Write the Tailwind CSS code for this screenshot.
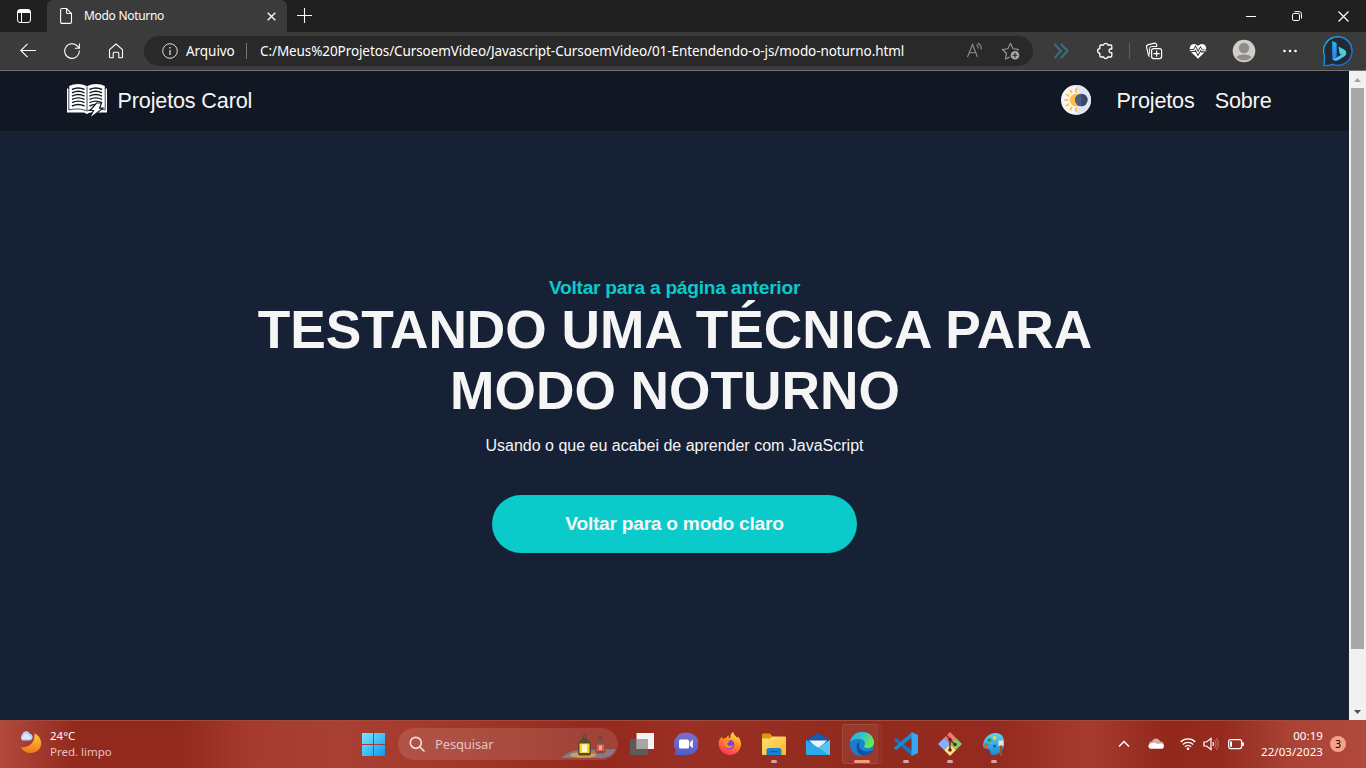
<!DOCTYPE html>
<html lang="pt-BR">
<head>
<meta charset="utf-8">
<title>Modo Noturno</title>
<script src="https://cdn.jsdelivr.net/npm/@tailwindcss/browser@4"></script>
</head>
<body class="w-[1366px] h-[768px] overflow-hidden flex flex-col bg-[#162136] font-['Noto_Sans','Open_Sans',sans-serif] text-white">

<!-- Title bar -->
<header class="flex h-8 bg-[#202020] shrink-0">
  <div class="w-[47px] flex items-center pl-[16px]">
    <svg class="size-4" viewBox="0 0 16 16" fill="none" stroke="#fff"><rect x="1.5" y="1.5" width="13" height="13" rx="2.5"/><path d="M2 3.5h12M2 2.5h12M2 4.500h12M5.500 5v9"/></svg>
  </div>
  <div class="w-[240px] bg-[#3b3b3b] rounded-t-[6px] flex items-center">
    <svg class="ml-[12px] w-[14px] h-[18px]" viewBox="0 0 14 18" fill="none" stroke="#fff" stroke-width="1.1"><path d="M3 1.5h4.5l5 5v8.5a1.4 1.4 0 0 1-1.4 1.4H3A1.4 1.4 0 0 1 1.600 15V2.900A1.400 1.400 0 0 1 3 1.500zM7.500 1.500v3.700a1.300 1.300 0 0 0 1.300 1.300h3.700"/></svg>
    <span class="ml-[11px] w-[183px] text-[12px] leading-4 tracking-[-0.3px] whitespace-nowrap">Modo Noturno</span>
    <svg class="size-[9px] shrink-0" viewBox="0 0 9 9" stroke="#fff" stroke-width="1.3"><path d="M.7.7l7.600 7.600M8.300.700L.700 8.300"/></svg>
  </div>
  <div class="ml-[10px] flex items-center pb-px"><svg class="size-[15px]" viewBox="0 0 15 15" stroke="#fff" stroke-width="1.1"><path d="M7.500 0v15M0 7.500h15"/></svg></div>
  <div class="ml-auto flex items-center">
    <div class="w-[46px] flex justify-center"><svg class="size-[10px]" viewBox="0 0 10 10" stroke="#fff"><path d="M0 5.500h10"/></svg></div>
    <div class="w-[46px] flex justify-center"><svg class="size-[10px]" viewBox="0 0 10 10" stroke="#fff" fill="none"><rect x=".5" y="2.500" width="7" height="7" rx="1.300"/><path d="M2.500.600h4.500a2.500 2.500 0 0 1 2.500 2.500v4.400"/></svg></div>
    <div class="w-[46px] flex justify-center"><svg class="size-[11px]" viewBox="0 0 11 11" stroke="#fff" stroke-width="1.200"><path d="M.500.500l10 10M10.500.500l-10 10"/></svg></div>
  </div>
</header>

<!-- Toolbar -->
<div class="flex items-center h-[39px] pb-px bg-[#3b3b3b] border-b border-[#727272] shrink-0">
  <svg class="ml-[20px] size-4" viewBox="0 0 16 16" fill="none" stroke="#fff" stroke-width="1.100"><path d="M16 7.500H.800M7.500.800L.800 7.500l6.700 6.700"/></svg>
  <svg class="ml-[28px] size-4" viewBox="0 0 16 16" fill="none" stroke="#fff" stroke-width="1.100"><path d="M15.300 7.500A7.300 7.300 0 1 1 13.800 3.600L15.300 5M15.400.500V5.300H10.800"/></svg>
  <svg class="ml-[28px] size-4" viewBox="0 0 16 16" fill="none" stroke="#fff" stroke-width="1.100" stroke-linejoin="round"><path d="M1.500 6.600L8 1l6.500 5.600v7.100a1 1 0 0 1-1 1h-2.700V10.200a1 1 0 0 0-1-1H6.200a1 1 0 0 0-1 1v4.500H2.500a1 1 0 0 1-1-1z"/></svg>
  <div class="ml-[20px] w-[889px] h-[30px] rounded-full bg-[#292929] flex items-center text-[13.5px]">
    <svg class="ml-[18px] size-4" viewBox="0 0 16 16" fill="none" stroke="#ddd"><circle cx="8" cy="8" r="7.300"/><path stroke-width="1.300" d="M8 7v5M8 4v1.500"/></svg>
    <span class="ml-[8px] mt-px w-[60px] tracking-[-0.05px] whitespace-nowrap">Arquivo</span>
    <span class="w-px h-4 bg-[#777]"></span>
    <span class="ml-[13px] mt-px w-[702px] whitespace-nowrap tracking-[-0.09px]">C:/Meus%20Projetos/CursoemVideo/Javascript-CursoemVideo/01-Entendendo-o-js/modo-noturno.html</span>
    <svg class="size-6 shrink-0" viewBox="0 0 24 24" fill="none" stroke="#8e8e8e" stroke-width="1.100"><path d="M5.500 18L10.500 5.500l5 12.500M7.300 13.800h6.400M14.500 5.500a5 5 0 0 1 1.800 4M16 4a7.300 7.300 0 0 1 3.300 6.500"/></svg>
    <svg class="ml-[13px] size-6 shrink-0" viewBox="0 0 24 24" fill="none" stroke="#9a9a9a" stroke-width="1.100" stroke-linejoin="round"><path d="M11 18l-4.500 2 1-5.500-4-4 5.400-.800L11.500 4.300 14.100 9.700l5.400.800-1 1"/><circle cx="16" cy="16.200" r="4.300" fill="#aaa" stroke="none"/><path stroke="#292929" d="M13.500 16.200h5M16 13.700v5"/></svg>
  </div>
  <svg class="ml-[16px] size-6" viewBox="0 0 24 24" fill="none" stroke="#386e81" stroke-width="2.200"><path d="M5.500 5l6.500 7-6.500 7M12 5l6.500 7-6.500 7"/></svg>
  <svg class="ml-[20px] size-6" viewBox="0 0 24 24" fill="none" stroke="#fff" stroke-width="1.300" stroke-linejoin="round"><path d="M8 6h2.600a2.200 2.200 0 0 1 4.200 0h2.800a1.200 1.200 0 0 1 1.200 1.200v2.800h-1a1.800 1.800 0 0 0 0 3.600h1v3.200a1.200 1.200 0 0 1-1.200 1.200h-2.800a2.200 2.200 0 0 1-4.200 0H8a1.200 1.200 0 0 1-1.200-1.200v-2.700a2.200 2.200 0 0 1 0-4.400V7.200A1.200 1.200 0 0 1 8 6z"/></svg>
  <span class="ml-[12px] w-px h-4 bg-[#5e5e5e]"></span>
  <svg class="ml-[12px] size-6" viewBox="0 0 24 24" fill="none" stroke="#fff" stroke-width="1.200"><rect x="9.600" y="9.600" width="10" height="10" rx="2"/><path d="M14.600 11.500v6.200M11.500 14.600h6.200M7.600 17.500c-.700-.400-1-.900-1.200-1.700L4.600 8.100a1.800 1.800 0 0 1 1.200-2.200l6.700-1.700a1.800 1.800 0 0 1 2 1.200l.500 1.800"/><path d="M7.600 15.500V9.700a2.200 2.200 0 0 1 2.200-2.200H15" stroke-width="1"/></svg>
  <svg class="ml-[20px] size-6" viewBox="0 0 24 24" fill="none"><path fill="#fff" d="M12 19.800L5.300 13.200C2 9.500 4.500 5 8 5c2 0 3 1 4 2 1-1 2-2 4-2 3.500 0 6 4.500 2.700 8.200z"/><path stroke="#3b3b3b" stroke-width="3" d="M4 11.500h4.200l1.300-2.300 2.500 5 2.500-4.400 1.500 2.200H20"/><path stroke="#fff" stroke-width="1.100" d="M3.800 11.500h4.400l1.300-2.300 2.500 5 2.500-4.400 1.500 2h4.200"/></svg>
  <svg class="ml-[22px] size-6" viewBox="0 0 24 24"><circle cx="12" cy="12" r="11.300" fill="#d2cfcb"/><circle cx="12" cy="9" r="5.200" fill="#918d88"/><path fill="#918d88" d="M4.500 18.500c1.500-4 13.500-4 15 0a11 11 0 0 1-15 0z"/></svg>
  <svg class="ml-[22px] size-6" viewBox="0 0 24 24" fill="#fff"><circle cx="6.500" cy="12" r="1.300"/><circle cx="12" cy="12" r="1.300"/><circle cx="17.500" cy="12" r="1.300"/></svg>
  <svg class="ml-[20px] size-8" viewBox="0 0 32 32">
    <defs><linearGradient id="br" x1="0" y1="0" x2="1" y2="1"><stop stop-color="#18b5ee"/><stop offset="1" stop-color="#2459e0"/></linearGradient><linearGradient id="bb" x1="0" y1="0" x2="0" y2="1"><stop stop-color="#28b5f7"/><stop offset="1" stop-color="#2874ef"/></linearGradient><linearGradient id="bc" x1="1" y1="0" x2="0" y2="1"><stop stop-color="#37e0cd"/><stop offset="1" stop-color="#54b4ff"/></linearGradient></defs>
    <path d="M16 1.700a14.300 14.300 0 1 1-5.500 27.600c-2.500 1.200-5 1.300-8.300 1.300C1.700 28 2.700 26 2.500 21A14.300 14.300 0 0 1 16 1.700z" fill="#222a33" stroke="url(#br)" stroke-width="1.400"/>
    <path fill="url(#bb)" d="M10.200 6l3.500 1.500c.800.400 1 .800 1 1.500V21l-1.500 4.500c-2 .300-3-1.500-3-3z"/>
    <path fill="url(#bc)" d="M16.500 11.500l6 3.200c2.500 1.800 2 5 .300 6.300l-6.300 4c-2.700 1.600-5 .500-6-1.500 2 .500 3-.200 4.500-1.200l4.500-2.700-2-1z"/>
  </svg>
</div>

<!-- Page viewport -->
<div class="flex h-[649px] shrink-0 font-['Liberation_Sans',Arial,sans-serif]">
  <main class="w-[1349px] flex flex-col">
    <nav class="flex items-center h-[60px] bg-[#111823] text-[21.6px] tracking-[-0.15px] leading-6 text-[#f5f5f5] shrink-0">
      <svg class="ml-[66px] -mt-px w-[42px] h-9" viewBox="0 0 42 36" fill="none">
        <path fill="#fff" d="M1 5.500h2.200V3C8 .500 15 0 21 3.200 27 0 34 .500 38.800 3v2.500H41V29.500H25c-2.500.200-3 1.500-4 1.500s-1.500-1.300-4-1.500H1z"/>
        <path stroke="#111823" stroke-width=".8" d="M2.800 5v22c6-1.500 13-1.500 18.200 1 5-2.500 12-2.500 18.200-1V5M21 3.500V27"/>
        <path stroke="#111823" stroke-width="1.400" d="M6 6.500c4-2 8.500-2 12.500 0M6 9.800c4-2 8.500-2 12.500 0M6 13.100c4-2 8.500-2 12.500 0M6 16.400c4-2 8.500-2 12.500 0M6 19.700c4-2 8.500-2 12.500 0M6 23c4-2 8.500-2 12.500 0M23.500 6.500c4-2 8.500-2 12.500 0M23.500 9.800c4-2 8.500-2 12.500 0M23.500 13.100c4-2 8.500-2 12.500 0M23.500 16.400c4-2 8.500-2 12.500 0M23.500 19.700c4-2 8.500-2 12.500 0M23.500 23c2-1 4-1.500 6-1.500"/>
        <path fill="#fff" stroke="#111823" stroke-width="1.200" d="M30.500 20h5l-2 5.200h3.500L23 36l4.500-8.500h-3.500z"/>
      </svg>
      <span class="ml-[9.5px]">Projetos Carol</span>
      <svg class="ml-auto -mt-[2px] size-[30px]" viewBox="0 0 30 30">
        <circle cx="15" cy="15" r="15" fill="#f5f5f7"/><path fill="#dfe3f2" d="M15 0a15 15 0 0 1 0 30z"/>
        <path stroke="#ffc34d" stroke-width="2" stroke-linecap="round" d="M15 4v2.500M15 23.500v2.500M9.500 5.500l1 2M9.500 24.500l1-2M5.500 9.500l2 1.200M5.500 20.500l2-1.200M4 15h2.500"/>
        <circle cx="15" cy="15" r="6.300" fill="#ffc043"/><circle cx="20.200" cy="15" r="6.300" fill="#4c5b81"/><path fill="#3d4667" d="M20.200 8.700a6.300 6.300 0 0 1 0 12.600z"/>
      </svg>
      <span class="ml-[26px]">Projetos</span>
      <span class="ml-[20px] mr-[77.5px]">Sobre</span>
    </nav>
    <section class="flex flex-col items-center pt-[146px] text-center">
      <a class="font-bold text-[19.2px] tracking-[-0.26px] leading-[22px] text-[#0acaca]">Voltar para a página anterior</a>
      <h1 class="w-[900px] pl-px font-bold text-[53.28px] leading-[61px] text-[#f5f5f5]">TESTANDO UMA TÉCNICA PARA<br>MODO NOTURNO</h1>
      <p class="mt-[16px] text-base leading-[18px] text-[#f5f5f5]">Usando o que eu acabei de aprender com JavaScript</p>
      <button class="mt-[40px] w-[365px] h-[58px] rounded-full bg-[#0acaca] font-bold text-[19.2px] tracking-[-0.26px] text-[#f5f5f5]">Voltar para o modo claro</button>
    </section>
  </main>
  <div class="w-[17px] bg-[#f1f1f1] flex flex-col items-center">
    <div class="h-[17px] flex items-center pt-px"><svg class="w-[7px] h-1" viewBox="0 0 7 4" fill="#a3a3a3"><path d="M0 4L3.500 0 7 4z"/></svg></div>
    <div class="w-[13px] h-[561px] bg-[#a8a8a8]"></div>
    <div class="mt-auto h-[17px] flex items-center"><svg class="w-[7px] h-1" viewBox="0 0 7 4" fill="#505050"><path d="M0 0h7L3.500 4z"/></svg></div>
  </div>
</div>

<!-- Taskbar -->
<footer class="h-12 shrink-0 flex items-center pb-px border-t border-[#a5493b] bg-[linear-gradient(90deg,#b2493c_0px,#a13a2d_38px,#92291d_75px,#92291d_180px,#a43b2e_250px,#a94034_340px,#a23628_470px,#94281c_600px,#9a3025_690px,#922a1e_850px,#952b20_1000px,#a63c31_1090px,#92281b_1165px,#942a1e_1220px,#aa4236_1290px,#b1493d_1366px)]">
  <svg class="ml-[18px] -mt-[5px] size-6" viewBox="0 0 24 24"><defs><linearGradient id="mo" x1="0" y1="0" x2="0" y2="1"><stop stop-color="#ffc93a"/><stop offset="1" stop-color="#f0791b"/></linearGradient></defs><path fill="url(#mo)" d="M16.500 3.500c10 4 9 19.500-4 19.500-4.500 0-7.500-2-9.500-5.500C12.500 17.500 17 12 16.500 3.500z"/><path fill="#b9d3fa" d="M4.500 10.500a4 4 0 0 1-.300-6c1-4 6-4.500 7.300-1 4 .500 4.500 7-.500 7z"/><path fill="#dbe9ff" d="M5 7c1-4 5-4 6-1 2 0 2 2 1 3H3z"/></svg>
  <div class="ml-[8px] w-[100px] text-[11.500px] leading-4 whitespace-nowrap"><div>24°C</div><div class="text-[#e6c2bd]">Pred. limpo</div></div>
  <svg class="ml-[212px] size-[23px] shrink-0" viewBox="0 0 23 23"><defs><linearGradient id="wi" x1="0" y1="0" x2="1" y2="1"><stop stop-color="#78e9ff"/><stop offset="1" stop-color="#0c97f2"/></linearGradient></defs><path fill="url(#wi)" d="M0 0h11v11H0zM12 0h11v11H12zM0 12h11v11H0zM12 12h11v11H12z"/></svg>
  <div class="ml-[13px] w-[220px] h-8 rounded-full bg-white/12 flex items-center overflow-hidden shrink-0">
    <svg class="ml-[11px] size-4" viewBox="0 0 16 16" fill="none" stroke="#f0dedb" stroke-width="1.700"><circle cx="6.800" cy="6.800" r="5.500"/><path stroke-linecap="round" d="M11 11l4 4"/></svg>
    <span class="ml-[10px] mt-px text-[13px] tracking-[-0.150px] text-[#e3c4c0]">Pesquisar</span>
    <svg class="ml-auto mr-px w-[56px] h-8" viewBox="0 0 56 32">
      <path fill="#827a91" d="M0 30c5-4 10-7.500 18-8l37-1c-3 5-6 8.500-14 9z"/><ellipse cx="22" cy="27" rx="13" ry="2.800" fill="#c8a55d"/><ellipse cx="39" cy="24.500" rx="9" ry="1.800" fill="#b76c68"/>
      <circle cx="23.500" cy="8.500" r="1.600" fill="none" stroke="#51463f"/><path fill="#594a32" d="M17 15l4.500-5h4l4.500 5v11l-1.500 1.500h-10L17 26z"/><path fill="#ffd02f" d="M18.500 15.500h10V25h-10z"/><path fill="#fff7c8" d="M21 16.500h5v7.500h-5z"/>
      <circle cx="39.500" cy="10" r="1.400" fill="none" stroke="#51463f"/><path fill="#7d5044" d="M34.500 16l3.500-4.500h3L44.500 16v8L43 25.500h-7L34.500 24z"/><path fill="#e5574b" d="M35.800 16.500h7.500v6.500h-7.500z"/><path fill="#ffab9c" d="M38 17.500h3v4.500h-3z"/>
    </svg>
  </div>
  <div class="ml-[2px] -mb-px flex h-[47px]">
    <div class="w-11 flex flex-col items-center pt-[11px]"><svg class="size-6" viewBox="0 0 24 24"><path fill="#f3f3f3" d="M6.500 1h17.500V17H6.500z"/><path fill="#5e5b5a" d="M0 7h6.500v10H18v6H0z"/><path fill="#a8a6a5" d="M6.500 7H18v10H6.500z"/></svg></div>
    <div class="w-11 flex flex-col items-center pt-[11px]"><svg class="size-6" viewBox="0 0 24 24"><defs><linearGradient id="ch" x1="0" y1="0" x2="0" y2="1"><stop stop-color="#7b6fd0"/><stop offset="1" stop-color="#4f5ec9"/></linearGradient></defs><path fill="url(#ch)" d="M12 .800a11.200 11.200 0 1 1 0 22.200H1l.800-5A11.200 11.200 0 0 1 12 .800z"/><rect x="5" y="7.500" width="10" height="9" rx="1.500" fill="#fff"/><path fill="#fff" d="M15.800 10.500l3-3v9l-3-3z"/></svg></div>
    <div class="w-11 flex flex-col items-center pt-[11px]"><svg class="size-6" viewBox="0 0 24 24"><defs><linearGradient id="ff" x1=".8" y1="0" x2=".3" y2="1"><stop stop-color="#fff04a"/><stop offset=".45" stop-color="#ff8a24"/><stop offset="1" stop-color="#ff2d65"/></linearGradient></defs><path fill="url(#ff)" d="M3.500 4.500L5 6.800C6 6 7 6 8 6.200 9 4.500 10 3.500 11 3.500L10.500 6c1.500.500 2-.500 2-2C12.800 2 14 .500 15.300 0c.200 3 3 4 4 6l.700-1.500c3.500 4 4 9 1.500 13-5.500 9-19.500 6.500-20.800-5C.400 9.500 1.200 7.500 2.800 6z"/><circle cx="11.500" cy="12.700" r="4.800" fill="#7545df"/><path fill="#ff8b22" d="M5.500 9c2-2 5-1.500 6.500 0l-2.500 2c-.500 1.500.500 3 2.500 3 1.500 0 2-1 3-.500-1 3-6.500 4-8.500 0z"/></svg></div>
    <div class="w-11 flex flex-col items-center pt-[11px]"><svg class="size-6" viewBox="0 0 24 24"><defs><linearGradient id="fo" x1="0" y1="0" x2="1" y2="1"><stop stop-color="#ffe07a"/><stop offset="1" stop-color="#fbb91e"/></linearGradient></defs><path fill="#d99a0b" d="M0 2.500a1 1 0 0 1 1-1h7l2 2.500V9H0z"/><path fill="url(#fo)" d="M0 6.500h8l2-2h13a1 1 0 0 1 1 1V22a1 1 0 0 1-1 1H1a1 1 0 0 1-1-1z"/><path fill="#1781d2" d="M4.500 23v-4.500a2.500 2.500 0 0 1 2.500-2.500h10a2.500 2.500 0 0 1 2.500 2.500V23z"/><path fill="#0e5ca5" d="M8 19h8v1.200H8z"/></svg><span class="mt-[4px] w-[6px] h-[3px] rounded-full bg-[#d5a6a0]"></span></div>
    <div class="w-11 flex flex-col items-center pt-[11px]"><svg class="size-6" viewBox="0 0 24 24"><path fill="#105caf" d="M0 8l12-7 12 7v7H0z"/><path fill="#f3f3f3" d="M3 8.500h18L12 17z"/><path fill="#2ca8ec" d="M0 8l24 15H1a1 1 0 0 1-1-1z"/><path fill="#51c8f7" d="M24 8v14a1 1 0 0 1-1 1l-11-7.500z"/></svg></div>
    <div class="w-11 pl-[2px] pt-[3px]">
      <div class="w-[40px] h-10 rounded-[4px] border border-white/5 bg-white/2">
        <div class="-mt-px -ml-px w-[36px] h-10 rounded-[4px] border border-white/5 bg-white/5 flex flex-col items-end pt-[7px] pr-[3px]"><svg class="size-6" viewBox="0 0 24 24"><defs><linearGradient id="e1" x1="0" y1="0" x2="1" y2=".5"><stop stop-color="#30a6e8"/><stop offset=".5" stop-color="#35c4c3"/><stop offset="1" stop-color="#6bea52"/></linearGradient></defs><circle cx="12" cy="12" r="12" fill="#1687d2"/><path fill="url(#e1)" d="M.200 10.500C1-3 23-4 24 10c0 6-7 7.500-10 5-.500-1 1-1.500 1-3.500C15 6 4 5 .200 10.500z"/><path fill="#124f9e" d="M9.200 9.500c-5 3.500-3.500 13 4 14.300 4 0 8-2.500 9.500-5.800-7 3.500-13 0-13.500-3.500-.300-2 .500-3.500 0-5z"/><path fill="#1f7acb" d="M.200 11C3 6 10.500 6.500 12 9c-5 0-7 6-4.500 10.500 1 2 2 3 4 4.500C3 24-.500 17 .200 11z"/></svg><span class="mt-[4px] mr-[4px] w-4 h-[3px] rounded-full bg-[#f79b80]"></span></div>
      </div>
    </div>
    <div class="w-11 flex flex-col items-center pt-[11px]"><svg class="size-6" viewBox="0 0 24 24"><path fill="#0b79c8" d="M0 7.500L2 6l16 12.500V24L1 9z"/><path fill="#148bd8" d="M0 16.500l2 1.700L18 5.500V0L1 15z"/><path fill="#32a9f4" d="M17.500 0L24 3v18l-6.500 3z"/></svg><span class="mt-[4px] w-[6px] h-[3px] rounded-full bg-[#d5a6a0]"></span></div>
    <div class="w-11 flex flex-col items-center pt-[11px]"><svg class="size-6" viewBox="0 0 24 24"><path fill="#f37770" d="M12 0l6 6-6 6-6-6z"/><path fill="#80b3ff" d="M6 6l6 6-6 6-6-6z"/><path fill="#83cb62" d="M18 6l6 6-6 6-6-6z"/><path fill="#ffe07d" d="M12 12l6 6-6 6-6-6z"/><path stroke="#772d26" stroke-width="1.500" fill="none" d="M8 3l4 4v11M12 8l5 4.500"/><g fill="#5e251d"><circle cx="12" cy="7.500" r="1.800"/><circle cx="12" cy="18" r="1.800"/><circle cx="17" cy="12.500" r="1.800"/></g></svg><span class="mt-[4px] w-[6px] h-[3px] rounded-full bg-[#d5a6a0]"></span></div>
    <div class="w-11 flex flex-col items-center pt-[11px]"><svg class="size-6" viewBox="0 0 24 24"><defs><linearGradient id="pa" x1="0" y1="0" x2="0" y2="1"><stop stop-color="#5bd5fa"/><stop offset="1" stop-color="#2088d0"/></linearGradient></defs><path fill="url(#pa)" d="M14 1c5 .200 8 3.500 8 8v5c-2 7-7 9-11.500 9-3 0-1.500-4-3.500-5.500-2-1.200-6-.500-6-4C1 6 8 .700 14 1z"/><circle cx="4.500" cy="13" r="2" fill="#e95528"/><circle cx="7.500" cy="8" r="2" fill="#25a332"/><circle cx="12.700" cy="6" r="2" fill="#ffc936"/><circle cx="12.500" cy="14" r="1.500" fill="#145994"/><path fill="#f0e4cd" d="M16.500 8.500h5V14h-5z"/><path fill="#9a551c" d="M17.800 13.500h2.400v10.200h-2.400z"/></svg><span class="mt-[4px] w-[6px] h-[3px] rounded-full bg-[#d5a6a0]"></span></div>
  </div>
  <svg class="ml-[102px] w-3 h-2 shrink-0" viewBox="0 0 12 8" fill="none" stroke="#fff" stroke-width="1.500"><path d="M1 6.500l5-5 5 5"/></svg>
  <svg class="ml-[18px] -mt-[2px] size-4 shrink-0" viewBox="0 0 16 16"><path fill="#d8aaa4" d="M1 9.500C1 7 2.500 6.500 4 6.500c1-4 7-4 8 0 3 0 4 2 3.800 4z"/><path fill="#fff" d="M2.500 13.800A2.700 2.700 0 0 1 2 8.700c3-.500 4-2 7.500.300 2-1 4.500-.500 5.500 0 2 2 .500 4.800-1.500 4.800z"/></svg>
  <svg class="ml-[16px] size-4 shrink-0" viewBox="0 0 16 16" fill="none" stroke="#fff" stroke-width="1.300"><path d="M.700 6a10.300 10.300 0 0 1 14.600 0M2.800 8.500a7.400 7.400 0 0 1 10.400 0M4.900 10.900a4.400 4.400 0 0 1 6.200 0"/><circle cx="8" cy="12.800" r="1.300" fill="#fff" stroke="none"/></svg>
  <svg class="ml-[7px] size-4 shrink-0" viewBox="0 0 16 16" fill="none" stroke="#fff" stroke-width="1.200"><path d="M1 6h2.500L8 2.500v11L3.500 10H1z"/><path d="M9.800 6a3.500 3.500 0 0 1 0 4"/><path stroke="#c0695f" d="M11.500 4.200a6.200 6.200 0 0 1 0 7.600M13.300 2.500a8.600 8.600 0 0 1 0 11"/></svg>
  <svg class="ml-[9px] size-4 shrink-0" viewBox="0 0 16 16" fill="none" stroke="#fff" stroke-width="1.200"><rect x=".6" y="3.600" width="13" height="9" rx="2"/><path stroke-width="2" d="M3 5.500v5.200M15 6.500v3.500"/></svg>
  <div class="ml-auto text-right text-[11.500px] leading-4 whitespace-nowrap tracking-[0.080px]"><div>00:19</div><div>22/03/2023</div></div>
  <div class="ml-[7px] mr-5 size-4 rounded-full bg-[#f5a087] text-black text-[10px] leading-4 text-center shrink-0">3</div>
</footer>
</body>
</html>
